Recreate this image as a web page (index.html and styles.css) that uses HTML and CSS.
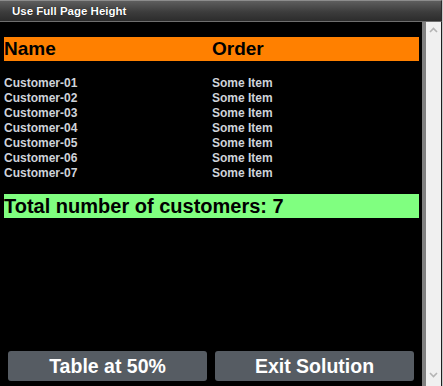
FILE: index.html
```html
<!DOCTYPE html>
<html lang="en">

<head>
    <meta charset="UTF-8">
    <meta name="viewport" content="width=device-width, initial-scale=1.0">
    <title>Customers</title>
    <link rel="stylesheet" href="styles.css">
</head>

<body>
    <div class="window">
        <div class="titlebar">Use Full Page Height</div>

        <div class="pane">
            <main class="content">
                <div class="table-head">
                    <span class="col-name">Name</span>
                    <span class="col-order">Order</span>
                </div>

                <div class="table-rows">
                    <div class="row"><span class="col-name">Customer-01</span><span class="col-order">Some Item</span></div>
                    <div class="row"><span class="col-name">Customer-02</span><span class="col-order">Some Item</span></div>
                    <div class="row"><span class="col-name">Customer-03</span><span class="col-order">Some Item</span></div>
                    <div class="row"><span class="col-name">Customer-04</span><span class="col-order">Some Item</span></div>
                    <div class="row"><span class="col-name">Customer-05</span><span class="col-order">Some Item</span></div>
                    <div class="row"><span class="col-name">Customer-06</span><span class="col-order">Some Item</span></div>
                    <div class="row"><span class="col-name">Customer-07</span><span class="col-order">Some Item</span></div>
                </div>

                <div class="total">Total number of customers: 7</div>

                <div class="actions">
                    <button class="action-btn">Table at 50%</button>
                    <button class="action-btn">Exit Solution</button>
                </div>
            </main>

            <div class="gutter"></div>

            <div class="scrollbar">
                <svg width="9" height="6" viewBox="0 0 9 6">
                    <path d="M1 5 L4.5 1.5 L8 5" fill="none" stroke="#b4b4b4" stroke-width="1.6" />
                </svg>
                <svg width="9" height="6" viewBox="0 0 9 6">
                    <path d="M1 1 L4.5 4.5 L8 1" fill="none" stroke="#b4b4b4" stroke-width="1.6" />
                </svg>
            </div>
        </div>
    </div>
</body>

</html>
```

FILE: styles.css
```css
/* Reset */
* {
    margin: 0;
    padding: 0;
    box-sizing: border-box;
}

body {
    font-family: 'Liberation Sans', Arial, sans-serif;
    background-color: #c8c8c8;
    width: 443px;
    height: 386px;
    overflow: hidden;
}

.window {
    display: flex;
    flex-direction: column;
    width: 443px;
    height: 386px;
    border-right: 1px solid #c8c8c8;
}

/* Title bar */
.titlebar {
    height: 22px;
    padding-left: 12px;
    border-top: 1px solid #8c8c8c;
    border-bottom: 1px solid #6e6e6e;
    border-right: 1px solid #2a2a2a;
    background: linear-gradient(#5e5e5e, #3c3c3c 55%, #2c2c2c);
    color: #fff;
    font-size: 11.5px;
    font-weight: bold;
    line-height: 20px;
    text-shadow: 0 0 1px #000;
}

/* Body with scrollbar */
.pane {
    display: flex;
    flex: 1;
}

.content {
    flex: 1;
    display: flex;
    flex-direction: column;
    background-color: #000;
    padding: 15px 3px 5px 4px;
}

.gutter {
    width: 4px;
    background-color: #808080;
}

.scrollbar {
    width: 16px;
    display: flex;
    flex-direction: column;
    justify-content: space-between;
    align-items: center;
    padding: 5px 0 8px;
    background-color: #f0f0f0;
    border-right: 1px solid #1e1e1e;
}

/* Table */
.table-head {
    display: flex;
    height: 24px;
    background-color: #ff8000;
    color: #000;
    font-size: 19px;
    font-weight: bold;
    line-height: 24px;
}

.col-name {
    width: 208px;
}

.table-rows {
    margin-top: 15px;
    margin-bottom: -1px;
}

.row {
    display: flex;
    height: 15px;
    color: #cfd3da;
    font-size: 12px;
    font-weight: bold;
    line-height: 15px;
}

.total {
    margin-top: 14px;
    height: 24px;
    background-color: #80ff80;
    color: #000;
    font-size: 20px;
    font-weight: bold;
    line-height: 24px;
}

/* Buttons */
.actions {
    display: flex;
    gap: 8px;
    margin-top: auto;
    padding: 0 5px 0 4px;
}

.action-btn {
    flex: 1;
    height: 30px;
    border: none;
    border-radius: 3px;
    background-color: #565c63;
    color: #fff;
    font-family: 'Liberation Sans', Arial, sans-serif;
    font-size: 19.5px;
    font-weight: bold;
    cursor: pointer;
}
```
